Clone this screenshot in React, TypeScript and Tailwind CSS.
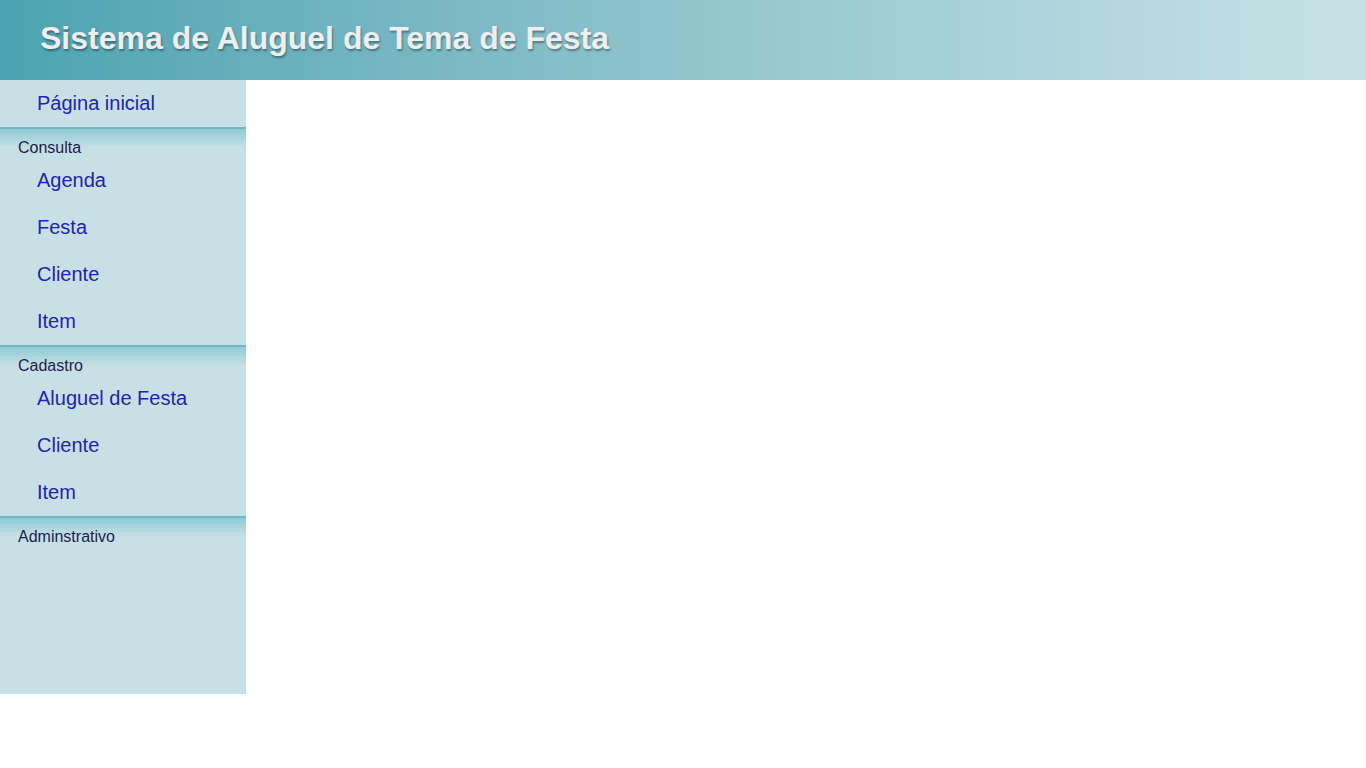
import React from "react";

type Section = { title: string; items: string[] };

const sections: Section[] = [
  { title: "Consulta", items: ["Agenda", "Festa", "Cliente", "Item"] },
  { title: "Cadastro", items: ["Aluguel de Festa", "Cliente", "Item"] },
  { title: "Adminstrativo", items: [] },
];

function NavLink({ label, first }: { label: string; first?: boolean }) {
  return (
    <a
      href="#"
      className={
        first
          ? "flex h-[47px] items-center pb-[2px] pl-[37px] text-[20px] text-[#2323b0]"
          : "flex h-[47px] items-center pl-[37px] text-[20px] text-[#2323b0]"
      }
    >
      {label}
    </a>
  );
}

function SectionHeader({ title }: { title: string }) {
  return (
    <div className="h-[29px] border-t-2 border-[#74b6c1] bg-gradient-to-b from-[#8ecbd4] to-[#c6e0e5] to-70% pl-[18px] pt-[9px] text-[16px] leading-[19px] text-[#1c1c4e]">
      {title}
    </div>
  );
}

export default function App() {
  return (
    <div className="min-h-[768px] bg-white font-['Liberation_Sans',Arial,sans-serif]">
      {/* Header */}
      <header className="flex h-[80px] items-center bg-gradient-to-r from-[#4ca3b1] via-[#9ccbd3] via-60% to-[#c7e2e6] pb-[4px] pl-[40px]">
        <h1 className="text-[32px] font-bold text-[#eeeeee] [text-shadow:1px_2px_2px_rgba(0,0,0,0.35)]">
          Sistema de Aluguel de Tema de Festa
        </h1>
      </header>

      <div className="flex">
        {/* Sidebar */}
        <nav className="h-[614px] w-[246px] bg-[#c6e0e5]">
          <NavLink label="Página inicial" first />
          {sections.map((s) => (
            <div key={s.title} className="pb-px">
              <SectionHeader title={s.title} />
              {s.items.map((item) => (
                <NavLink key={item} label={item} />
              ))}
            </div>
          ))}
        </nav>

        {/* Content */}
        <main className="flex-1" />
      </div>
    </div>
  );
}
